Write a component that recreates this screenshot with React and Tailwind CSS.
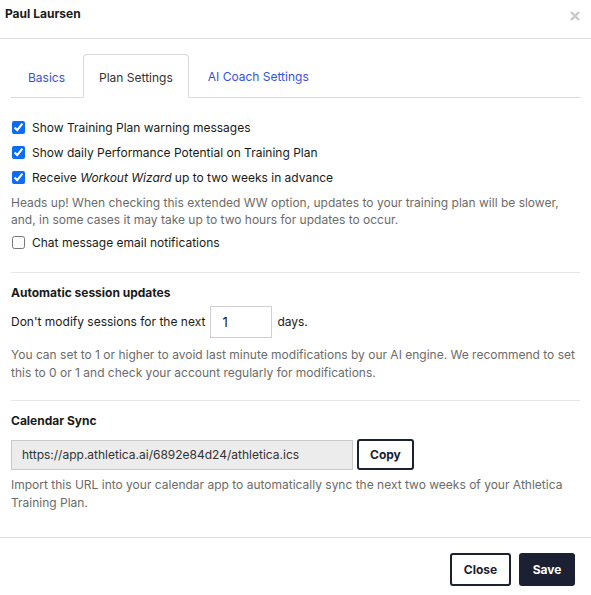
import React from "react";

export default function App() {
  return (
    <div className="w-[591px] h-[595px] bg-white text-[#1a1a1a] flex flex-col" style={{ fontFamily: "Inter, 'Noto Sans', sans-serif" }}>
      <div className="h-[39px] border-b border-[#e2e2e2] flex items-start justify-between pl-[5px] pr-[10px] pt-[5px]">
        <div className="text-[12px] font-bold leading-[18px]">Paul Laursen</div>
        <svg width="12" height="12" viewBox="0 0 12 12" className="mt-[5px]">
          <path d="M2 2 L10 10 M10 2 L2 10" stroke="#c8c8c8" strokeWidth="2.4" />
        </svg>
      </div>
      <div className="flex-1 px-[11px] pt-[15px]">
        <div className="flex border-b border-[#d9d9d9] h-[44px] text-[12px]">
          <div className="pl-[17px] pr-[18px] pt-[3px] flex items-center text-[#3552e0] mb-[-1px]">Basics</div>
          <div className="px-[15px] pt-[3px] flex items-center border border-[#d9d9d9] border-b-white rounded-t-[4px] bg-white mb-[-1px] text-[#333]">Plan Settings</div>
          <div className="px-[19px] pt-[3px] flex items-center text-[#3552e0]">AI Coach Settings</div>
        </div>
        <div className="pt-[17px] text-[12px]">
          <label className="flex items-center h-[25px] gap-[7px]">
            <input type="checkbox" defaultChecked className="w-[13px] h-[13px] m-0 ml-[1px] accent-[#0b6cf5]" />
            <span>Show Training Plan warning messages</span>
          </label>
          <label className="flex items-center h-[25px] gap-[7px]">
            <input type="checkbox" defaultChecked className="w-[13px] h-[13px] m-0 ml-[1px] accent-[#0b6cf5]" />
            <span>Show daily Performance Potential on Training Plan</span>
          </label>
          <label className="flex items-center h-[25px] gap-[7px]">
            <input type="checkbox" defaultChecked className="w-[13px] h-[13px] m-0 ml-[1px] accent-[#0b6cf5]" />
            <span>Receive <i>Workout Wizard</i> up to two weeks in advance</span>
          </label>
          <p className="text-[#6b6b6b] text-[12px] leading-[17px] mt-[4px]">
            Heads up! When checking this extended WW option, updates to your training plan will be slower, and, in some cases it may take up to two hours for updates to occur.
          </p>
          <label className="flex items-center h-[25px] gap-[7px] mt-[2px]">
            <input type="checkbox" className="w-[13px] h-[13px] m-0 ml-[1px] accent-[#0b6cf5]" />
            <span>Chat message email notifications</span>
          </label>
        </div>
        <div className="border-t border-[#e6e6e6] mt-[17px] pt-[11px]">
          <div className="text-[12px] font-bold leading-[17px]">Automatic session updates</div>
          <div className="flex items-center mt-[5px] text-[12px]">
            <span>Don't modify sessions for the next</span>
            <input defaultValue="1" className="ml-[5px] mr-[5px] w-[62px] h-[32px] border border-[#d0d0d0] px-[11px] text-[13px] outline-none" />
            <span>days.</span>
          </div>
          <p className="text-[#6b6b6b] text-[12px] leading-[18px] mt-[8px]">
            You can set to 1 or higher to avoid last minute modifications by our AI engine. We recommend to set this to 0 or 1 and check your account regularly for modifications.
          </p>
        </div>
        <div className="border-t border-[#e6e6e6] mt-[18px] pt-[11px]">
          <div className="text-[12px] font-bold leading-[17px]">Calendar Sync</div>
          <div className="flex items-center mt-[10px] gap-[4px]">
            <div className="w-[342px] h-[30px] bg-[#ececec] border border-[#c9c9c9] flex items-center px-[10px] text-[12px] text-[#333]">https://app.athletica.ai/6892e84d24/athletica.ics</div>
            <button className="h-[31px] px-[11px] border-2 border-[#1c2033] rounded-[3px] text-[12px] font-bold text-[#1c2033]">Copy</button>
          </div>
          <p className="text-[#6b6b6b] text-[12px] leading-[18px] mt-[6px]">
            Import this URL into your calendar app to automatically sync the next two weeks of your Athletica Training Plan.
          </p>
        </div>
      </div>
      <div className="h-[58px] border-t border-[#e2e2e2] flex items-start justify-end gap-[8px] pr-[16px] pt-[15px]">
        <button className="h-[33px] w-[61px] border-2 border-[#1c2033] rounded-[3px] text-[12px] font-bold text-[#1c2033]">Close</button>
        <button className="h-[33px] w-[56px] bg-[#1c2033] rounded-[3px] text-[12px] font-bold text-white">Save</button>
      </div>
    </div>
  );
}
